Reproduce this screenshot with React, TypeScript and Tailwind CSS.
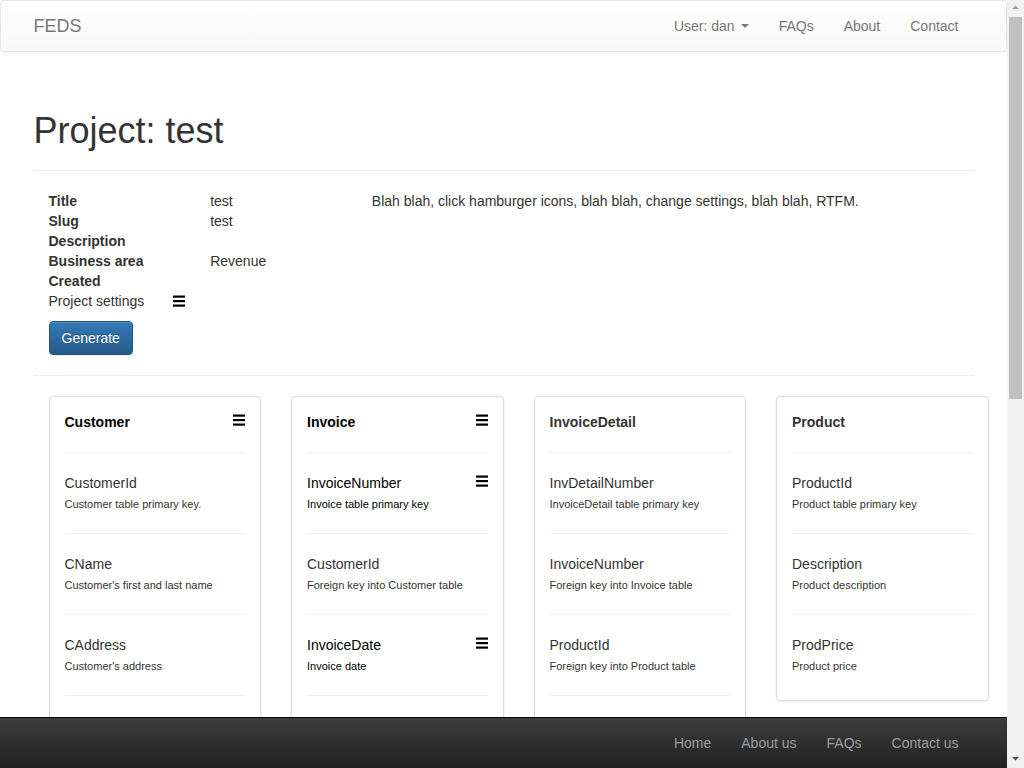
import React from "react";

type Field = { name: string; desc: string; menu?: boolean };
type Table = { title: string; menu?: boolean; fields: Field[]; more?: boolean };

const tables: Table[] = [
  {
    title: "Customer",
    menu: true,
    more: true,
    fields: [
      { name: "CustomerId", desc: "Customer table primary key." },
      { name: "CName", desc: "Customer's first and last name" },
      { name: "CAddress", desc: "Customer's address" },
    ],
  },
  {
    title: "Invoice",
    menu: true,
    more: true,
    fields: [
      { name: "InvoiceNumber", desc: "Invoice table primary key", menu: true },
      { name: "CustomerId", desc: "Foreign key into Customer table" },
      { name: "InvoiceDate", desc: "Invoice date", menu: true },
    ],
  },
  {
    title: "InvoiceDetail",
    more: true,
    fields: [
      { name: "InvDetailNumber", desc: "InvoiceDetail table primary key" },
      { name: "InvoiceNumber", desc: "Foreign key into Invoice table" },
      { name: "ProductId", desc: "Foreign key into Product table" },
    ],
  },
  {
    title: "Product",
    fields: [
      { name: "ProductId", desc: "Product table primary key" },
      { name: "Description", desc: "Product description" },
      { name: "ProdPrice", desc: "Product price" },
    ],
  },
];

const Burger = ({ className = "" }: { className?: string }) => (
  <svg width="12" height="12" viewBox="0 0 12 12" className={"block shrink-0 " + className}>
    <rect x="0" y="0.5" width="12" height="2.2" fill="#000" />
    <rect x="0" y="5" width="12" height="2.2" fill="#000" />
    <rect x="0" y="9.5" width="12" height="2.2" fill="#000" />
  </svg>
);

function Card({ t }: { t: Table }) {
  return (
    <div className="px-[15px]">
      <div className="border border-[#ddd] rounded-[4px] bg-white p-[15px] shadow-[0_1px_2px_rgba(0,0,0,0.08)]">
        <div className="flex justify-between items-start">
          <div className={"font-bold leading-[20px] " + (t.menu ? "text-black" : "text-[#333]")}>{t.title}</div>
          {t.menu && <Burger className="mt-[2px]" />}
        </div>
        {t.fields.map((f, i) => (
          <div key={i}>
            <div className={"border-t border-[#eee] " + (i === 0 ? "mt-[20px]" : "mt-[10px]")} />
            <div className="pt-[20px] pb-[10px]">
              <div className="flex justify-between items-start">
                <div className={"leading-[20px] " + (f.menu ? "text-black" : "text-[#333]")}>{f.name}</div>
                {f.menu && <Burger className="mt-[2px]" />}
              </div>
              <div className={"mt-[3px] text-[11px] leading-[17px] " + (f.menu ? "text-black" : "text-[#333]")}>{f.desc}</div>
            </div>
          </div>
        ))}
        {t.more && (
          <div>
            <div className="border-t border-[#eee] mt-[10px]" />
            <div className="h-[80px]" />
          </div>
        )}
      </div>
    </div>
  );
}

export default function App() {
  const labels: { l: string; v: string }[] = [
    { l: "Title", v: "test" },
    { l: "Slug", v: "test" },
    { l: "Description", v: "" },
    { l: "Business area", v: "Revenue" },
    { l: "Created", v: "" },
  ];
  return (
    <div className="w-[1024px] h-[768px] overflow-hidden flex bg-white text-[#333] text-[14px] leading-[20px] font-['Liberation_Sans',Arial,sans-serif]">
      <div className="relative w-[1007px] h-[768px] overflow-hidden">
        <nav className="h-[52px] border border-[#e7e7e7] rounded-[4px] bg-linear-to-b from-white to-[#f8f8f8] shadow-[inset_0_1px_0_rgba(255,255,255,0.15),0_1px_5px_rgba(0,0,0,0.075)]">
          <div className="w-[970px] mx-auto px-[15px] flex justify-between">
            <div className="text-[18px] leading-[20px] py-[15px] text-[#777]">FEDS</div>
            <ul className="flex">
              <li className="px-[15px] py-[15px] text-[#777] flex items-center">
                User: dan
                <span className="inline-block w-0 h-0 ml-[6px] border-t-[4px] border-t-[#777] border-x-[4px] border-x-transparent" />
              </li>
              <li className="px-[15px] py-[15px] text-[#777]">FAQs</li>
              <li className="px-[15px] py-[15px] text-[#777]">About</li>
              <li className="px-[15px] py-[15px] text-[#777]">Contact</li>
            </ul>
          </div>
        </nav>

        <div className="w-[970px] mx-auto px-[15px]">
          <div className="mt-[59px] pb-[9px] mb-[20px] border-b border-[#eee]">
            <h1 className="text-[36px] leading-[40px] font-normal text-[#333] mb-[10px]">Project: test</h1>
          </div>

          <div className="w-[970px] grid grid-cols-12">
            <div className="col-span-2 px-[15px]">
              {labels.map((r) => (
                <div key={r.l} className="font-bold h-[20px]">{r.l}</div>
              ))}
              <div className="flex items-center h-[20px]">
                <span className="w-[124px] shrink-0">Project settings</span>
                <Burger />
              </div>
              <button className="mt-[10px] px-[12px] py-[6px] text-white text-[14px] leading-[20px] rounded-[4px] border border-[#245580] bg-linear-to-b from-[#337ab7] to-[#265a88] shadow-[inset_0_1px_0_rgba(255,255,255,0.15),0_1px_1px_rgba(0,0,0,0.075)] [text-shadow:0_-1px_0_rgba(0,0,0,0.2)]">
                Generate
              </button>
            </div>
            <div className="col-span-2 px-[15px]">
              {labels.map((r) => (
                <div key={r.l} className="h-[20px]">{r.v}</div>
              ))}
            </div>
            <div className="col-span-8 px-[15px]">
              <p>Blah blah, click hamburger icons, blah blah, change settings, blah blah, RTFM.</p>
            </div>
          </div>

          <div className="my-[20px] border-t border-[#eee]" />

          <div className="w-[970px] grid grid-cols-4 items-start">
            {tables.map((t) => (
              <Card key={t.title} t={t} />
            ))}
          </div>
        </div>

        <footer className="absolute bottom-0 left-0 w-full h-[51px] border-t border-[#080808] bg-linear-to-b from-[#3c3c3c] to-[#222]">
          <div className="w-[970px] mx-auto px-[15px] flex justify-end">
            {["Home", "About us", "FAQs", "Contact us"].map((s) => (
              <div key={s} className="px-[15px] py-[15px] text-[#9d9d9d] leading-[20px]">{s}</div>
            ))}
          </div>
        </footer>
      </div>

      <div className="w-[17px] h-[768px] bg-[#f1f1f1] flex flex-col">
        <svg width="17" height="17" viewBox="0 0 17 17" className="block">
          <polygon points="5,9 8.5,5.5 12,9" fill="#a3a3a3" />
        </svg>
        <div className="ml-[2px] w-[13px] h-[382px] bg-[#c1c1c1]" />
        <div className="flex-1" />
        <svg width="17" height="17" viewBox="0 0 17 17" className="block">
          <polygon points="5,6 12,6 8.5,9.5" fill="#505050" />
        </svg>
      </div>
    </div>
  );
}
